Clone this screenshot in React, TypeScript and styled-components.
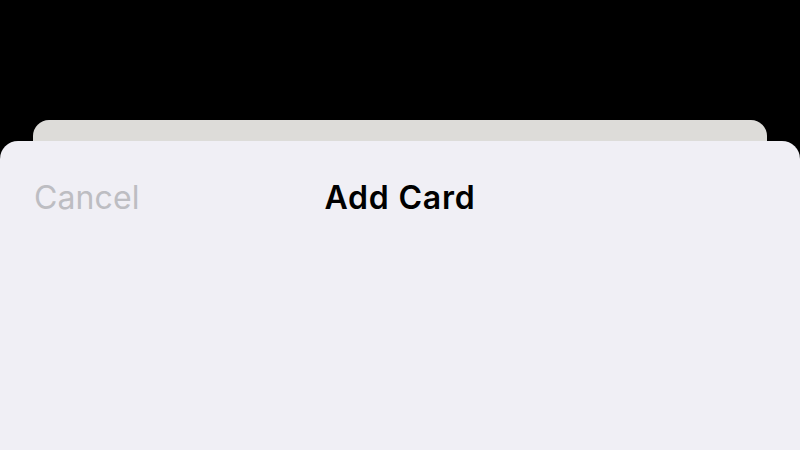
import React from 'react';
import styled, { createGlobalStyle } from 'styled-components';

const GlobalStyle = createGlobalStyle`
  html, body {
    margin: 0;
    padding: 0;
    background: #000;
    height: 100%;
    overflow: hidden;
  }
  #root {
    height: 100%;
  }
`;

const Screen = styled.div`
  height: 450px;
  width: 800px;
  background: #000;
  padding-top: 120px;
  box-sizing: border-box;
  display: flex;
  flex-direction: column;
  font-family: Inter, "Noto Sans", sans-serif;
`;

const BackCard = styled.div`
  height: 21px;
  margin: 0 33px;
  background: #dddcd9;
  border-radius: 16px 16px 0 0;
  flex-shrink: 0;
`;

const Sheet = styled.div`
  flex: 1;
  background: #f0eff5;
  border-radius: 18px 18px 0 0;
`;

const Header = styled.div`
  display: grid;
  grid-template-columns: 1fr auto 1fr;
  align-items: center;
  padding: 37px 34px 0;
`;

const CancelButton = styled.button`
  justify-self: start;
  border: none;
  background: none;
  padding: 0;
  font-family: inherit;
  font-size: 32px;
  font-weight: 400;
  color: #bdbdc2;
  letter-spacing: 0.1px;
  cursor: pointer;
`;

const Title = styled.h1`
  margin: 0;
  font-size: 32px;
  font-weight: 600;
  color: #000;
  letter-spacing: 0.8px;
`;

export default function App() {
  return (
    <>
      <GlobalStyle />
      <Screen>
        <BackCard />
        <Sheet>
          <Header>
            <CancelButton>Cancel</CancelButton>
            <Title>Add Card</Title>
            <span />
          </Header>
        </Sheet>
      </Screen>
    </>
  );
}
